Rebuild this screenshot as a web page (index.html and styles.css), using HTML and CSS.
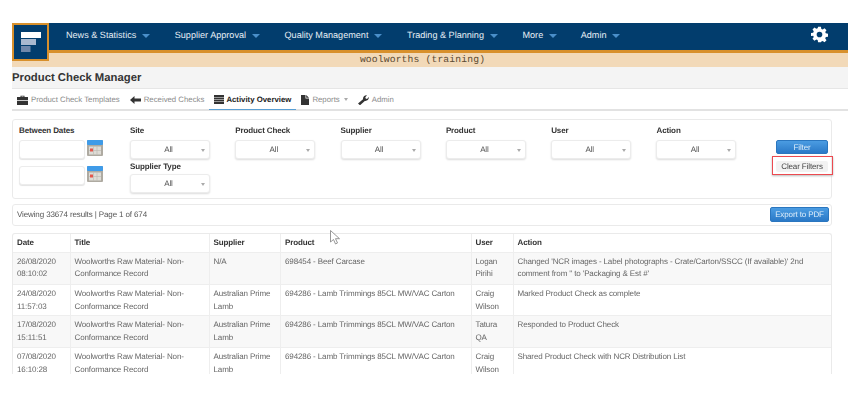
FILE: index.html
```html
<!DOCTYPE html>
<html lang="en">
<head>
<meta charset="utf-8">
<title>Product Check Manager</title>
<link rel="stylesheet" href="styles.css">
</head>
<body>
<div class="app">
  <header class="topbar">
    <a class="logo" href="#" aria-label="Home">
      <svg width="22" height="22" viewBox="0 0 22 22"><rect x="0" y="0" width="20" height="6" fill="#fff"/><rect x="0" y="7" width="15" height="6" fill="#a9b9cf"/><rect x="0" y="14" width="9.500" height="6" fill="#6f88ab"/></svg>
    </a>
    <nav class="mainnav">
      <a class="navitem" href="#">News &amp; Statistics<i class="navcaret"></i></a>
      <a class="navitem" href="#">Supplier Approval<i class="navcaret"></i></a>
      <a class="navitem" href="#">Quality Management<i class="navcaret"></i></a>
      <a class="navitem" href="#">Trading &amp; Planning<i class="navcaret"></i></a>
      <a class="navitem nav-more" href="#">More<i class="navcaret"></i></a>
      <a class="navitem" href="#">Admin<i class="navcaret"></i></a>
    </nav>
    <svg class="gear" width="17" height="17" viewBox="0 0 24 24"><path fill="#fff" fill-rule="evenodd" d="M10 1h4l.6 3.100 1.900.8 2.600-1.800 2.800 2.800-1.800 2.600.8 1.900 3.100.6v4l-3.100.6-.8 1.900 1.800 2.600-2.800 2.800-2.600-1.800-1.900.8L14 23h-4l-.6-3.100-1.900-.8-2.600 1.800-2.800-2.800 1.800-2.600-.8-1.900L0 14v-4l3.100-.6.8-1.900-1.800-2.600 2.800-2.800 2.600 1.800 1.900-.8zM12 8a4 4 0 1 0 0 8 4 4 0 0 0 0-8z"/></svg>
  </header>
  <div class="tenant">woolworths (training)</div>
  <div class="pagetitle"><h1>Product Check Manager</h1></div>
  <nav class="tabs">
    <a class="tab" href="#">
      <svg width="11" height="10" viewBox="0 0 11 10"><path fill="#333" d="M3.500 2V.8h4V2H11v3H0V2zM4.500 2h2v-.4h-2zM0 5.800h11V10H0z"/></svg>Product Check Templates</a>
    <a class="tab" href="#">
      <svg width="11" height="8" viewBox="0 0 11 8"><path fill="#333" d="M0 4l4.500-4v2.500H11v3H4.500V8z"/></svg>Received Checks</a>
    <a class="tab active" href="#">
      <svg width="10" height="9" viewBox="0 0 10 9"><path fill="#333" d="M0 0h10v2H0zM0 2.500h10v1.700H0zM0 4.700h10v1.800H0zM0 7h10v2H0z"/></svg>Activity Overview</a>
    <a class="tab" href="#">
      <svg width="8" height="10" viewBox="0 0 8 10"><path fill="#333" d="M0 0h4.500v3.500H8V10H0zM5.200 0L8 2.800H5.200z"/></svg>Reports<i class="tabcaret"></i></a>
    <a class="tab" href="#">
      <svg width="11" height="10" viewBox="0 0 11 10"><path fill="#333" d="M0 8.500L5 4.200C4.800 2 6.500 0 9 .3L7.300 2.200l.4 1.300 1.300.4L10.800 2c.4 2.300-1.700 4.300-4 3.900L2 10.300z"/></svg>Admin</a>
  </nav>

  <main class="content">
    <section class="panel filters">
      <div class="datefield">
        <label class="flabel">Between Dates</label>
        <div class="daterow"><input class="dateinput" type="text" aria-label="From"><svg class="cal" width="16" height="16" viewBox="0 0 16 16"><rect width="16" height="16" rx="1" fill="#aeaaa1"/><rect width="16" height="5" rx="1" fill="#3f9be8"/><rect x="2" y="6.500" width="12" height="8" fill="#dedcd6"/><path stroke="#b9b7b0" stroke-width=".6" d="M6.500 6.500v8M10 6.500v8M2 10.500h12"/><rect x="3" y="8.500" width="3" height="3" fill="#e2574c"/></svg></div>
        <div class="daterow"><input class="dateinput" type="text" aria-label="To"><svg class="cal" width="16" height="16" viewBox="0 0 16 16"><rect width="16" height="16" rx="1" fill="#aeaaa1"/><rect width="16" height="5" rx="1" fill="#3f9be8"/><rect x="2" y="6.500" width="12" height="8" fill="#dedcd6"/><path stroke="#b9b7b0" stroke-width=".6" d="M6.500 6.500v8M10 6.500v8M2 10.500h12"/><rect x="3" y="8.500" width="3" height="3" fill="#e2574c"/></svg></div>
      </div>
      <div class="selects">
        <div class="field"><label class="flabel">Site</label><div class="select">All<i class="selcaret"></i></div></div>
        <div class="field"><label class="flabel">Product Check</label><div class="select">All<i class="selcaret"></i></div></div>
        <div class="field"><label class="flabel">Supplier</label><div class="select">All<i class="selcaret"></i></div></div>
        <div class="field"><label class="flabel">Product</label><div class="select">All<i class="selcaret"></i></div></div>
        <div class="field"><label class="flabel">User</label><div class="select">All<i class="selcaret"></i></div></div>
        <div class="field"><label class="flabel">Action</label><div class="select">All<i class="selcaret"></i></div></div>
        <div class="field field-type"><label class="flabel">Supplier Type</label><div class="select">All<i class="selcaret"></i></div></div>
      </div>
      <div class="actions">
        <button class="btn btn-blue btn-filter" type="button">Filter</button>
        <div class="highlight"><button class="btn btn-grey" type="button">Clear Filters</button></div>
      </div>
    </section>

    <section class="panel results">
      <span>Viewing 33674 results | Page 1 of 674</span>
      <button class="btn btn-blue btn-export" type="button">Export to PDF</button>
    </section>

    <section class="panel tablewrap">
      <table class="activity">
        <colgroup><col class="c-date"><col class="c-title"><col class="c-supplier"><col class="c-product"><col class="c-user"><col class="c-action"></colgroup>
        <thead><tr><th>Date</th><th>Title</th><th>Supplier</th><th>Product</th><th>User</th><th>Action</th></tr></thead>
        <tbody>
          <tr><td>26/08/2020 08:10:02</td><td>Woolworths Raw Material- Non-Conformance Record</td><td>N/A</td><td>698454 - Beef Carcase</td><td>Logan Pirihi</td><td>Changed 'NCR images - Label photographs - Crate/Carton/SSCC (If available)' 2nd comment from '' to 'Packaging &amp; Est #'</td></tr>
          <tr><td>24/08/2020 11:57:03</td><td>Woolworths Raw Material- Non-Conformance Record</td><td>Australian Prime Lamb</td><td>694286 - Lamb Trimmings 85CL MW/VAC Carton</td><td>Craig Wilson</td><td>Marked Product Check as complete</td></tr>
          <tr><td>17/08/2020 15:11:51</td><td>Woolworths Raw Material- Non-Conformance Record</td><td>Australian Prime Lamb</td><td>694286 - Lamb Trimmings 85CL MW/VAC Carton</td><td>Tatura QA</td><td>Responded to Product Check</td></tr>
          <tr><td>07/08/2020 16:10:28</td><td>Woolworths Raw Material- Non-Conformance Record</td><td>Australian Prime Lamb</td><td>694286 - Lamb Trimmings 85CL MW/VAC Carton</td><td>Craig Wilson</td><td>Shared Product Check with NCR Distribution List</td></tr>
        </tbody>
      </table>
    </section>
    <svg class="cursor" width="12" height="15" viewBox="0 0 12 15"><path fill="#fff" stroke="#7d7d7d" stroke-width=".8" d="M.5.500v11.500l3-2.500 2 4.500 2-1-2-4.300h4z"/></svg>
  </main>
</div>
</body>
</html>
```
FILE: styles.css
```css
* { box-sizing: border-box; }
html, body { margin: 0; height: 100%; background: #fff; overflow: hidden; }
body { font-family: "Liberation Sans", Arial, sans-serif; color: #333; text-rendering: geometricPrecision; }
a { color: inherit; text-decoration: none; }

.app { position: relative; width: 836px; margin: 23px 0 0 12px; filter: blur(.35px); }

.topbar { position: relative; display: flex; align-items: center; height: 30px; background: #023d6d; border-bottom: 3px solid #d8902c; padding-left: 54px; }
.logo { position: absolute; left: 0; top: 0; z-index: 2; display: flex; align-items: center; justify-content: center; width: 37px; height: 38px; background: #023d6d; border: 2px solid #d8902c; padding: 1px 0 0 2px; }
.mainnav { display: flex; align-items: center; height: 24px; padding-bottom: 3px; }
.navitem { display: flex; align-items: center; color: #e6eef5; font-size: 9.100px; white-space: nowrap; margin-right: 24.500px; }
.nav-more { margin-right: 23.500px; }
.navcaret { display: inline-block; width: 0; height: 0; margin-left: 6px; margin-top: 2px; border: 4px solid transparent; border-top: 4px solid #4a8fca; border-bottom: 0; }
.gear { position: absolute; right: 20px; top: 3px; }

.tenant { height: 14px; background: #f2d9b8; text-align: center; font-family: "Liberation Mono", monospace; font-size: 9.700px; line-height: 14px; letter-spacing: .15px; color: #5b4a32; padding-right: 15px; }
.pagetitle { height: 22px; background: #f4f4f4; border-bottom: 1px solid #e6e6e6; padding-top: 4px; }
.pagetitle h1 { margin: 0; font-size: 11.300px; line-height: 15px; font-weight: 700; color: #333; }

.tabs { display: flex; height: 22px; background: #fff; border-bottom: 2px solid #e2e2e2; }
.tab { display: flex; align-items: center; gap: 3px; height: 21px; padding: 0 5px; font-size: 7.800px; color: #8c8c8c; white-space: nowrap; }
.tab.active { color: #222; font-weight: 700; border-bottom: 1px solid #5a9fd4; gap: 2px; padding: 0 5px; }
.tabcaret { display: inline-block; width: 0; height: 0; margin-left: 1px; border: 2.500px solid transparent; border-top: 3px solid #aaa; border-bottom: 0; }

.content { position: relative; width: 820px; padding-top: 8px; display: flex; flex-direction: column; gap: 5px; letter-spacing: -.12px; }
.panel { background: #fff; border: 1px solid #eaeaea; border-radius: 3px; }

.filters { display: flex; height: 80px; padding: 6px 0 0 6px; }
.flabel { display: block; font-size: 8px; line-height: 10px; font-weight: 700; color: #333; white-space: nowrap; }
.datefield { width: 111px; flex: none; }
.daterow { display: flex; gap: 2px; margin-top: 4px; height: 19px; }
.daterow + .daterow { margin-top: 7px; }
.dateinput { width: 66px; height: 19px; padding: 0; border: 1px solid #ececec; border-radius: 3px; background: #fff; box-shadow: 0 1px 1px #e4e4e4; }
.cal { flex: none; }
.selects { display: grid; grid-template-columns: repeat(6, 105.300px); width: 632px; flex: none; }
.field-type { grid-column: 1; margin-top: -2px; }
.field-type .select { margin-top: 2px; }
.select { position: relative; width: 80px; height: 19px; margin-top: 4px; border: 1px solid #ececec; border-radius: 3px; box-shadow: 0 1px 2px #dcdcdc; background: #fff; text-align: center; font-size: 8px; line-height: 18px; color: #555; padding-right: 3px; }
.selcaret { position: absolute; right: 4px; top: 8px; width: 0; height: 0; border: 2.500px solid transparent; border-top: 3px solid #aaa; border-bottom: 0; }

.actions { flex: none; width: 58px; margin-left: 11px; padding-top: 14px; display: flex; flex-direction: column; }
.btn { font-family: inherit; font-size: 8px; letter-spacing: -.12px; border-radius: 2px; padding: 0; cursor: pointer; text-rendering: geometricPrecision; }
.btn-blue { color: #dfeefa; border: 1px solid #2a76bf; background: linear-gradient(#4b9ce2, #2a79c7); }
.btn-filter { width: 52px; height: 14px; margin-left: 3px; line-height: 11px; }
.highlight { width: 61px; height: 19px; margin-top: 2px; margin-left: -1px; border: 1.500px solid #ec4a50; box-shadow: 0 1px 2px #bbb; padding: 3.500px 2px 0 3px; }
.btn-grey { display: block; width: 52px; height: 11px; border: 0; background: #f2f2f2; color: #444; line-height: 11px; }

.results { display: flex; align-items: center; justify-content: space-between; height: 22px; padding: 0 2px 1px 4px; font-size: 8px; color: #555; }
.btn-export { width: 59px; height: 15px; line-height: 13px; }

.tablewrap { height: 141px; overflow: hidden; margin-top: 2px; border-bottom: 0; border-radius: 3px 3px 0 0; }
.activity { width: 100%; border-collapse: collapse; table-layout: fixed; font-size: 8px; line-height: 12.600px; color: #666; }
.c-date { width: 57px; }
.c-title { width: 139px; }
.c-supplier { width: 71.500px; }
.c-product { width: 190.500px; }
.c-user { width: 42px; }
.activity th { height: 18px; padding: 2px 4px 0; text-align: left; font-weight: 700; color: #333; border-left: 1px solid #eee; }
.activity td { height: 32px; padding: 3.500px 4px 0; vertical-align: top; border-left: 1px solid #eee; border-top: 1px solid #eee; }
.activity tbody tr:nth-child(1) td { padding-top: 3px; }
.activity tbody tr:nth-child(2) td { height: 31px; }
.activity th:first-child, .activity td:first-child { border-left: 0; }
.activity tbody tr:nth-child(odd) { background: #f8f8f8; }

.cursor { position: absolute; left: 318px; top: 119px; }
```
